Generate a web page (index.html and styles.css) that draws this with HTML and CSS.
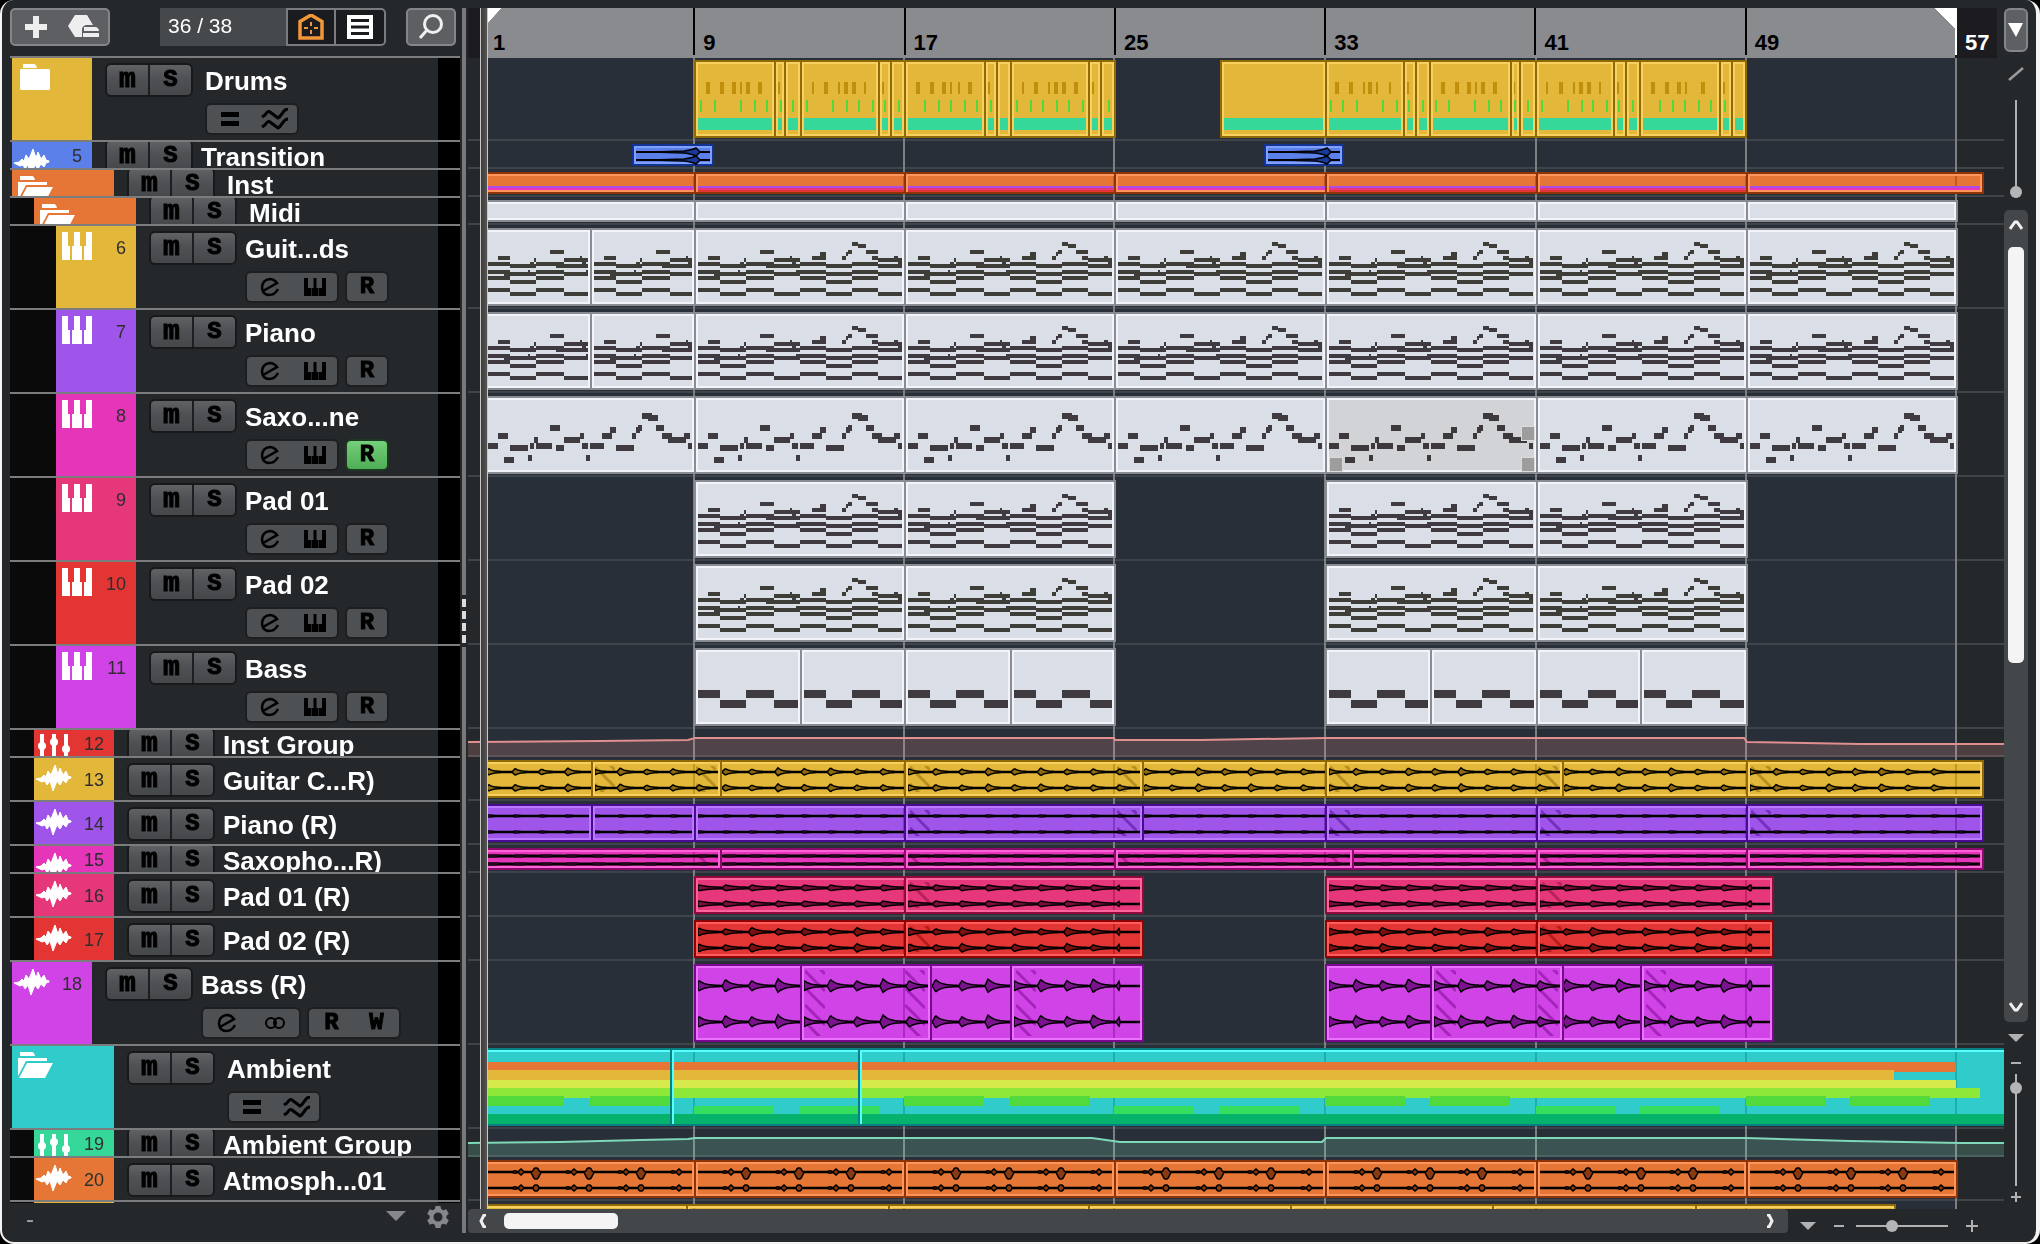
FILE: index.html
```html
<!DOCTYPE html>
<html lang="en">
<head>
<meta charset="utf-8">
<title>Project window</title>
<link rel="stylesheet" href="styles.css">
</head>
<body>
<div class="window">
  <section class="panel" aria-label="Track list">
    <header class="toolbar">
      <div class="tool-group">
        <button class="tool" aria-label="Add track"><svg width="22" height="22" viewBox="0 0 22 22"><path d="M8 0h6v8h8v6h-8v8H8v-8H0V8h8z" fill="#eee"/></svg></button>
        <button class="tool" aria-label="Track presets"><svg width="32" height="24" viewBox="0 0 32 24"><path d="M7 0h12l6 10H19q-4 0-5 4v8H7L0 11z" fill="#eee"/><path d="M16 12h12q3 1 3 4H16zM15 18h16v4H15z" fill="#eee"/></svg></button>
      </div>
      <div class="view-group">
        <output class="count">36 / 38</output>
        <button class="view" aria-label="Zones"><svg width="26" height="26" viewBox="0 0 26 26" fill="none" stroke="#f2963a"><path d="M2 25V8.500L13 2l11 6.500V25z" stroke-width="3.500" transform="translate(0 -1)"/><path d="M13 8v4M13 16v4M6 14h4M16 14h4" stroke-width="2"/></svg></button>
        <button class="view" aria-label="List view"><svg width="26" height="24" viewBox="0 0 26 24"><path d="M0 0h26v24H0z" fill="#fff"/><path d="M4 5.500h18M4 12h18M4 18.500h18" stroke="#1a1b1e" stroke-width="3"/></svg></button>
      </div>
      <button class="tool search" aria-label="Find track"><svg width="26" height="26" viewBox="0 0 26 26" fill="none" stroke="#f0f0f0" stroke-width="3"><circle cx="15" cy="10" r="8.500"/><path d="M9 16l-7 8"/></svg></button>
    </header>
    <div class="tracks" id="tracks"></div>
    <footer class="panel-foot">
      <span class="foot-name">-</span>
      <button class="plain" aria-label="Track list menu"><svg width="20" height="10" viewBox="0 0 20 10"><path d="M0 0h20L10 10z" fill="#85878a"/></svg></button>
      <button class="plain gear" aria-label="Settings"><svg width="24" height="24" viewBox="-12 -12 24 24"><g fill="#85878a"><path id="tooth" d="M-2.500-11h5l1 5h-7z"/><use href="#tooth" transform="rotate(60)"/><use href="#tooth" transform="rotate(120)"/><use href="#tooth" transform="rotate(180)"/><use href="#tooth" transform="rotate(240)"/><use href="#tooth" transform="rotate(300)"/></g><circle r="6.500" fill="none" stroke="#85878a" stroke-width="4"/></svg></button>
    </footer>
  </section>

  <div class="divider"><i class="rail"></i><span class="grip"><i></i><i></i><i></i><i></i></span><i class="rail"></i></div>

  <main class="timeline">
    <div class="ruler">
      <span class="gutter"></span>
      <span class="bar first">1</span><span class="bar">9</span><span class="bar">17</span><span class="bar">25</span><span class="bar">33</span><span class="bar">41</span><span class="bar last">49</span><span class="bar end">57</span>
      <span class="rest"></span>
    </div>
    <div class="lanes" id="lanes"></div>
    <div class="cursor"></div>
    <div class="bottom">
      <div class="hscroll">
        <button class="plain" aria-label="Scroll left"><svg width="10" height="14" viewBox="0 0 10 14"><path d="M8 1H6L3 7l3 6h2" fill="none" stroke="#f0f0f0" stroke-width="3"/></svg></button>
        <span class="hthumb"></span>
        <button class="plain right" aria-label="Scroll right"><svg width="10" height="14" viewBox="0 0 10 14"><path d="M1 1h2l3 6-3 6H1" fill="none" stroke="#f0f0f0" stroke-width="3"/></svg></button>
      </div>
      <div class="hzoom">
        <button class="plain" aria-label="Zoom presets"><svg width="16" height="8" viewBox="0 0 16 8"><path d="M0 0h16L8 8z" fill="#b0b1b3"/></svg></button>
        <button class="plain" aria-label="Zoom out"><svg width="10" height="12" viewBox="0 0 10 12"><path d="M0 5h10v2H0z" fill="#b0b1b3"/></svg></button>
        <input class="slider" type="range" aria-label="Horizontal zoom" value="37">
        <button class="plain" aria-label="Zoom in"><svg width="12" height="12" viewBox="0 0 12 12"><path d="M5 0h2v5h5v2H7v5H5V7H0V5h5z" fill="#b0b1b3"/></svg></button>
      </div>
    </div>
  </main>

  <aside class="side">
    <button class="drop" aria-label="Event display"><svg width="16" height="14" viewBox="0 0 16 14"><path d="M0 0h15L8 14z" fill="#fff"/></svg></button>
    <svg class="slash" width="16" height="16" viewBox="0 0 16 16"><path d="M1 14L15 2" stroke="#9a9b9d" stroke-width="2.500"/></svg>
    <input class="slider vertical wave-zoom" type="range" aria-label="Waveform zoom" value="0">
    <div class="vscroll">
      <button class="plain" aria-label="Scroll up"><svg width="14" height="12" viewBox="0 0 14 12"><path d="M1 10l5-7h2l5 7" fill="none" stroke="#f0f0f0" stroke-width="3"/></svg></button>
      <span class="vthumb"></span>
      <button class="plain down" aria-label="Scroll down"><svg width="14" height="12" viewBox="0 0 14 12"><path d="M1 2l5 7h2l5-7" fill="none" stroke="#f0f0f0" stroke-width="3"/></svg></button>
    </div>
    <div class="vzoom">
      <button class="plain" aria-label="Height presets"><svg width="16" height="8" viewBox="0 0 16 8"><path d="M0 0h16L8 8z" fill="#b0b1b3"/></svg></button>
      <button class="plain" aria-label="Smaller tracks"><svg width="10" height="2" viewBox="0 0 10 2"><path d="M0 0h10v2H0z" fill="#b0b1b3"/></svg></button>
      <input class="slider vertical" type="range" aria-label="Vertical zoom" value="92">
      <button class="plain" aria-label="Taller tracks"><svg width="10" height="10" viewBox="0 0 10 10"><path d="M4 0h2v4h4v2H6v4H4V6H0V4h4z" fill="#b0b1b3"/></svg></button>
    </div>
  </aside>
</div>
<script src="script.js"></script>
</body>
</html>
```

FILE: styles.css
```css
* { box-sizing: border-box; }

body {
  margin: 0;
  background: #000;
  font-family: "Liberation Sans", Arial, sans-serif;
  color: #fff;
}

button {
  margin: 0;
  padding: 0;
  border: 0;
  background: none;
  color: inherit;
  font: inherit;
  display: flex;
  align-items: center;
  justify-content: center;
}

svg { display: block; flex: none; }

.window {
  display: grid;
  grid-template-columns: 452px 6px minmax(0, 1fr) 32px;
  height: 100vh;
  padding: 8px 0 0 8px;
  background: #25282b;
  border: solid #f4f4f4;
  border-width: 0 4px 2px 2px;
  border-radius: 14px;
  overflow: hidden;
}

/* ---- track list ---- */

.panel {
  display: flex;
  flex-direction: column;
  min-height: 0;
  padding-right: 2px;
}

.toolbar {
  display: flex;
  height: 48px;
  flex: none;
}

.tool-group,
.tool.search {
  height: 38px;
  background: #5d5f62;
  border: 2px solid #838588;
  border-radius: 5px;
}

.tool-group { display: flex; width: 100px; }
.tool { flex: 1; }
.tool.search { flex: none; width: 50px; margin-left: 20px; }

.view-group {
  display: flex;
  width: 226px;
  height: 38px;
  margin-left: 50px;
}

.count {
  width: 126px;
  padding-left: 8px;
  background: #46494c;
  font-size: 21px;
  line-height: 36px;
}

.view {
  width: 50px;
  background: #1a1b1e;
  border: 2px solid #797b7e;
}

.view:last-child { border-left: 0; border-radius: 0 5px 5px 0; }

.tracks {
  flex: 1;
  min-height: 0;
  overflow: hidden;
}

.track {
  display: flex;
  overflow: hidden;
  height: 44px;
  border-top: 2px solid #7a7c7e;
  background: linear-gradient(to left, #000 22px, transparent 22px);
}

.track.small { height: 28px; }
.track.tall { height: 84px; }

.indent { width: 2px; flex: none; background: #25282b; }
.level1 .indent { width: 24px; background: #0a0a0a; }
.level2 .indent { width: 46px; background: #0a0a0a; }

.tag {
  display: flex;
  justify-content: space-between;
  flex: none;
  width: 80px;
  padding-right: 10px;
  color: #2e2e2e;
}

.open .tag { width: 102px; }

.number {
  padding-top: 12px;
  font-size: 18px;
  line-height: 20px;
}

.small .number { padding-top: 4px; }

.ms {
  display: flex;
  flex: none;
  width: 88px;
  height: 34px;
  margin: 5px 0 0 13px;
  border: 2px solid #17191b;
  border-radius: 6px;
  background: linear-gradient(#606265, #505255 40%, #45484b);
  overflow: hidden;
}

.ms button { flex: 1; }
.ms button + button { border-left: 2px solid #1c1e20; }

.key {
  color: #000;
  font: bold 24px/24px "Liberation Mono", monospace;
  -webkit-text-stroke: 1px #000;
}

.mute { font-size: 28px; }

.info { margin-left: 8px; }
.folder .info { margin-left: 12px; }

.name {
  display: block;
  padding-top: 8px;
  font-size: 26px;
  font-weight: bold;
  line-height: 30px;
  white-space: nowrap;
}

.small .ms { margin-top: -3px; }
.small .name { padding-top: 0; }

.actions { display: flex; gap: 6px; margin-top: 7px; }

.action {
  display: flex;
  width: 94px;
  height: 32px;
  border: 2px solid #1c1e20;
  border-radius: 6px;
  background: #4d5154;
  color: #000;
}

.action button { flex: 1; }
.action.wide { width: 100px; }
.action.single { width: 44px; }
.action.armed { background: linear-gradient(#74d07a, #4fae55); border-color: #1d3a20; }

.panel-foot {
  display: flex;
  align-items: flex-start;
  flex: none;
  height: 39px;
  color: #a0a2a4;
}

.foot-name { flex: 1; padding: 4px 0 0 16px; font-size: 24px; line-height: 24px; }
.panel-foot .plain { margin-top: 8px; }
.panel-foot .gear { margin: 2px 10px 0 20px; }

/* ---- divider ---- */

.divider {
  display: flex;
  flex-direction: column;
  padding: 0 2px 9px 0;
}

.rail { flex: 1; background: #77797b; }
.grip { display: flex; flex-direction: column; gap: 4px; height: 52px; padding-top: 4px; }
.grip i { height: 8px; background: #dcdcdc; }

/* ---- timeline ---- */

.timeline {
  position: relative;
  display: flex;
  flex-direction: column;
  min-height: 0;
}

.ruler {
  position: relative;
  z-index: 1;
  display: flex;
  flex: none;
  height: 50px;
  color: #000;
  font-size: 22px;
  font-weight: bold;
  line-height: 24px;
  text-indent: 10px;
}

.gutter { flex: 150 0 0; background: #1c1c20; }

.bar {
  flex: 2103 0 0;
  padding-top: 23px;
  background: linear-gradient(#000, #000) 0 0 / 2px 47px no-repeat #8a8b8f;
}

.bar.first { background: linear-gradient(to bottom right, #fff 50%, transparent 52%) 0 0 / 18px 20px no-repeat #8a8b8f; }
.bar.last { background: linear-gradient(#000, #000) 0 0 / 2px 47px no-repeat, linear-gradient(to bottom left, #fff 50%, transparent 52%) 100% 0 / 20px 20px no-repeat #8a8b8f; }
.bar.end { flex-grow: 420; background: linear-gradient(#fff, #fff) 0 0 / 2px 47px no-repeat #1c1c20; color: #fff; }
.rest { flex: 69 0 0; background: #25282b; }

.lanes {
  flex: 1;
  min-height: 0;
  margin-top: -1px;
  overflow: hidden;
}

.lane { width: 100%; height: 44px; }
.lane.small { height: 28px; }
.lane.tall { height: 84px; }
.tint { mix-blend-mode: multiply; }

.cursor {
  position: absolute;
  z-index: 2;
  left: 12px;
  top: 0;
  bottom: 33px;
  width: 8px;
  background: linear-gradient(to right, #3c3c3c, #585652);
  border: solid #c8c8c8;
  border-width: 0 1px;
}

.bottom { display: flex; flex: none; height: 33px; }

.hscroll {
  display: flex;
  align-items: center;
  flex: 1;
  height: 24px;
  padding: 0 12px 0 10px;
  background: #44474a;
  border-radius: 4px;
}

.hthumb {
  width: 114px;
  height: 16px;
  margin-left: 16px;
  border-radius: 5px;
  background: #f4f4f4;
}

.right { margin-left: auto; }

.hzoom {
  display: flex;
  align-items: center;
  width: 216px;
  gap: 12px;
  padding: 0 26px 0 12px;
}

.hzoom .plain:first-child { margin-right: 6px; }
.hzoom .plain:last-child { margin-left: 6px; }

/* ---- sliders and right column ---- */

.slider {
  appearance: none;
  width: 92px;
  height: 14px;
  margin: 0;
  background: linear-gradient(#b0b1b3, #b0b1b3) center / 100% 2px no-repeat;
}

.slider::-webkit-slider-thumb {
  appearance: none;
  width: 12px;
  height: 12px;
  border-radius: 6px;
  background: #b4b5b7;
}

.slider.vertical {
  writing-mode: vertical-lr;
  direction: rtl;
  width: 14px;
  height: 112px;
  background: linear-gradient(#b0b1b3, #b0b1b3) center / 2px 100% no-repeat;
}

.slider.wave-zoom { height: 98px; margin-top: 18px; }

.side {
  display: flex;
  flex-direction: column;
  align-items: center;
  width: 24px;
  min-height: 0;
}

.drop {
  width: 24px;
  height: 44px;
  flex: none;
  background: #5d5f62;
  border: 2px solid #838588;
  border-radius: 6px;
}

.slash { margin-top: 14px; }

.vscroll {
  display: flex;
  flex-direction: column;
  align-items: center;
  flex: 1;
  width: 24px;
  margin-top: 12px;
  padding: 9px 0 9px;
  border-radius: 5px;
  background: #44474a;
}

.vthumb {
  width: 16px;
  height: 416px;
  margin-top: 16px;
  border-radius: 5px;
  background: #f4f4f4;
}

.down { margin-top: auto; }

.vzoom {
  display: flex;
  flex-direction: column;
  align-items: center;
  height: 220px;
  padding-top: 12px;
}

.vzoom .plain:nth-child(2) { margin: 20px 0 10px; }
.vzoom .plain:last-child { margin-top: 6px; }
```

FILE: script.js
```js
// Colours of a clip: body, edge and inner highlight.
const C = {
  gold: ['#e2b73a', '#8f6a06', '#f8d05e'],
  blue: ['#5b80ea', '#123392', '#7fa0ff'],
  orange: ['#e57636', '#8e3508', '#fd955c'],
  midi: ['#dadee6', '#898d93', '#f3f4f9'],
  purple: ['#a055ea', '#4b0a94', '#ba7aff'],
  pink: ['#e535b8', '#8c0a6b', '#ff62d6'],
  rose: ['#e5377a', '#900a3c', '#ff649c'],
  red: ['#e43535', '#8e0404', '#ff5c5c'],
  violet: ['#d043e6', '#790790', '#ea72ff'],
  teal: ['#30cccb', '#088080', '#58ffff'],
  green: ['#35d899', '#0a7a50', '#6fffc8']
};

const VIEW_X = 468, VIEW_W = 1536;            // visible range of the timeline
const BARS = [484, 694, 904, 1114, 1325, 1536, 1746, 1956];  // every 8 bars
const BAR = 26.27;

const rect = (x, y, w, h, fill, o = 1) =>
  `<rect x="${x}" y="${y}" width="${w}" height="${h}" fill="${fill}"${o < 1 ? ` opacity="${o}"` : ''}/>`;
const blocks = (list, fill) =>
  `<path fill="${fill}" d="${list.map(([x, y, w, h]) => `M${x} ${y}h${w}v${h}h${-w}z`).join('')}"/>`;

function clip(color, x1, x2, h, inner = '') {
  const [body, edge, light] = C[color];
  let s = rect(x1, 3, x2 - x1, h - 6, edge) + rect(x1 + 2, 5, x2 - x1 - 4, h - 10, light) +
    rect(x1 + 4, 7, x2 - x1 - 8, h - 14, body);
  for (const b of BARS) if (b - 1 > x1 + 3 && b + 1 < x2 - 3 && color !== 'midi') s += rect(b - 1, 7, 2, h - 14, edge, .4);
  return s + `<svg x="${x1 + 4}" y="3" width="${Math.max(x2 - x1 - 8, 1)}" height="${h - 6}" viewBox="${x1 + 4} 0 ${Math.max(x2 - x1 - 8, 1)} ${h - 6}" preserveAspectRatio="none">${inner}</svg>`;
}

/* ---- MIDI parts: [x, y, width, height] inside an 8-bar part ---- */
const span = (y, h, ...xs) => xs.map(([a, b]) => [a, y, b - a, h]);
const CHORDS = [
  ...span(34, 4, [4, 26], [52, 80], [106, 132], [158, 184]), ...span(36, 4, [26, 52], [72, 106], [132, 158], [184, 208]),
  ...span(42, 4, [4, 26], [52, 80], [102, 132], [158, 184]), ...span(44, 4, [20, 52], [80, 106], [132, 158], [184, 208]),
  ...span(48, 4, [4, 26], [52, 80], [106, 132], [158, 184]), ...span(52, 4, [26, 52], [132, 158]),
  ...span(60, 4, [4, 26], [52, 80], [106, 132], [158, 184]), ...span(64, 4, [26, 52], [80, 106], [132, 158], [184, 208]),
  ...span(28, 4, [14, 26], [118, 132], [148, 152], [178, 184]), ...span(22, 4, [66, 80], [154, 158], [172, 184]),
  ...span(30, 4, [50, 52], [80, 106], [184, 208]), ...span(28, 2, [96, 98], [200, 204]), ...span(24, 4, [126, 132], [152, 154]),
  [46, 34, 4, 2], [44, 42, 2, 2], [98, 32, 4, 5], [204, 30, 4, 7], [20, 44, 6, 8], [158, 14, 6, 4], [164, 16, 8, 4]
];
const MELODY = [
  ...span(47, 6, [4, 14], [46, 50], [52, 68], [98, 104], [106, 120], [204, 208]), ...span(37, 6, [14, 24], [96, 100], [118, 128], [148, 152], [178, 188], [200, 206]),
  ...span(61, 6, [20, 30]), ...span(49, 6, [26, 44], [72, 80], [132, 150]), ...span(59, 6, [44, 48], [102, 106]),
  ...span(41, 6, [50, 54], [80, 96], [184, 202]), ...span(29, 6, [66, 76], [154, 158], [172, 180]), ...span(31, 6, [126, 132], [152, 156]),
  ...span(17, 6, [158, 168]), ...span(19, 6, [164, 174])
];
const BASSLINE = [...span(42, 8, [4, 26], [52, 80]), ...span(52, 8, [26, 52], [80, 104])];
const at = (list, x) => list.map(n => [n[0] + x, n[1], n[2], n[3]]);

const midi = (parts, notes, ink, h) => parts.map(([a, b]) => clip('midi', a, b, h, blocks(at(notes, a === 480 ? 484 : a), ink))).join('');
const FULL = BARS.slice(0, 7).map((b, i) => [i ? b : 480, BARS[i + 1] + 2]);
const SPLIT = [[480, 592], [590, 696], ...FULL.slice(1)];
const PADS = [[694, 906], [904, 1116], [1325, 1538], [1536, 1748]];
const BASSES = [[694, 802], [800, 906], [904, 1012], [1010, 1116], [1325, 1432], [1430, 1538], [1536, 1642], [1640, 1748]];

/* ---- audio ---- */
const DARK = { gold: '#8f6a10', purple: '#6a28b0', pink: '#a01880', rose: '#7c0d3c', red: '#7d1010', violet: '#7d1290' };

function envelope(x1, x2, cy, amp, tau, stop, fill, bars) {
  const up = [], down = [];
  for (let x = x1; x <= x2; x += 1) {
    const d = x - 486, k = Math.floor(d / BAR), t = d - k * BAR;
    const level = amp * (bars ? bars[((k % bars.length) + bars.length) % bars.length] : 1);
    let e = t < 3 ? level * t / 3 : level * Math.exp(-(t - 3) / tau);
    if (x > stop) e = 0;
    up.push(`${x} ${(cy - e - .5).toFixed(1)}`);
    down.unshift(`${x} ${(cy + e * .9 + .5).toFixed(1)}`);
  }
  return `<path d="M${up.join('L')}L${down.join('L')}z" fill="${fill}" stroke="#000" stroke-width="1.500" shape-rendering="auto"/>`;
}

function hatch(x1, w, h, ink) {
  let d = '';
  for (let y = -16; y < h; y += 17) d += `M${x1} ${y}l${w} ${w}`;
  return `<svg x="${x1}" y="6" width="${w}" height="${h - 18}" viewBox="${x1} 0 ${w} ${h - 18}"><path d="${d}" stroke="${ink}" stroke-width="3" opacity=".5" shape-rendering="auto"/></svg>`;
}

function audio(color, parts, h, [y1, y2], amp, tau, bars) {
  return parts.map(([a, b, fades = [], stop = 9999]) => clip(color, a, b, h,
    fades.map(f => hatch(f, 20, h, C[color][1])).join('') +
    [y1, y2].map(y => envelope(a + 4, b - 4, y, amp, tau, stop, DARK[color], bars)).join(''))).join('');
}

const PAD_AUDIO = [[694, 930], [904, 1144, [910], 1119], [1325, 1570], [1536, 1774, [1542], 1751]];

/* wind-like recording: a small bump before each strong one, every two bars */
function atmosphere(h) {
  return FULL.map(([a, b]) => {
    const s = a === 480 ? 484 : a;
    const wave = (cy, big, low) => {
      const shape = (x, dir) => {
        let e = .5;
        for (const c of [37, 90, 142, 195]) e = Math.max(e, 3 - Math.abs(x - s - c) * .9, 1.300 - Math.abs(x - s - c + 6) * .3);
        for (const c of [52, 105, 157]) e = Math.max(e, Math.min(dir < 0 ? big : low, (dir < 0 ? big + 3 : low + 3) - Math.abs(x - s - c) * 1.900));
        return cy + dir * e;
      };
      const xs = Array.from({ length: b - a - 7 }, (_, i) => a + 4 + i);
      return `<path d="M${xs.map(x => x + ' ' + shape(x, -1).toFixed(1)).join('L')}L${xs.slice().reverse().map(x => x + ' ' + shape(x, 1).toFixed(1)).join('L')}z" fill="#8a3a10" stroke="#000" stroke-width="1.500" shape-rendering="auto"/>`;
    };
    return clip('orange', a, b, h, wave(12, 4, 7) + wave(28, 3, 3));
  }).join('');
}

function sweep(a, b, peak) {
  return clip('blue', a, b, 28, [8, 16].map(y =>
    `<path d="M${a} ${y}H${b}" stroke="#000" stroke-width="2"/><path d="M${a + 20} ${y}L${peak - 12} ${y - 1}Q${peak - 4} ${y - 2} ${peak} ${y - 4}L${peak + 4} ${y}L${peak} ${y + 4}Q${peak - 4} ${y + 2} ${peak - 12} ${y + 1}z" fill="#173a9c" stroke="#000" stroke-width="1.500" shape-rendering="auto"/>`).join(''));
}

/* ---- folders ---- */
function drums(h) {
  const group = (x0, cuts, brown, green) => cuts.slice(0, -1).map((c, i) => {
    const a = x0 + c, b = x0 + cuts[i + 1] + 2;
    return clip('gold', a, b, h, blocks([[a + 4, 58, b - a - 8, 12]], '#35d899') +
      blocks(brown.map(n => [x0 + Math.abs(n), 22, n < 0 ? 2 : 4, 12]), '#c08f0c') +
      blocks(green.map(n => [x0 + n, 40, 2, 12]), '#52d93c'));
  }).join('');
  return group(694, [0, 80, 90, 106, 184, 196, 210, 290, 302, 316, 394, 406, 420],
    [12, 26, 38, -46, 52, 64, -84, -118, 130, -144, 150, 158, -170, -188, 222, 236, 248, -256, -264, 274, -294, -328, 340, -354, 360, 368, 380, -398],
    [6, 20, 46, 60, 72, 86, 98, 112, 138, 152, 164, 178, 190, 204, 230, 244, 256, 270, 282, 296, 322, 336, 348, 362, 374, 388, 414]) +
    group(1220, [0, 105], [], []) +
    group(1325, [0, 78, 90, 104, 185, 194, 210, 288, 300, 314, 394, 406, 420],
      [10, 24, -38, 43, -51, -64, -82, 116, 130, 142, -150, 156, 168, -188, -221, 234, -248, 254, 262, -274, -292, 326, 340, 352, -360, 376, -398],
      [5, 17, 31, 57, 71, 83, 97, 110, 123, 149, 163, 175, 189, 202, 216, 242, 256, 267, 281, 293, 307, 334, 347, 359, 373, 385, 399]);
}

function inst(h) {
  return BARS.slice(0, 7).map((b, i) => {
    const a = i ? b : 480, e = i < 6 ? BARS[i + 1] + 6 : 1984, pads = [1, 2, 4, 5].includes(i);
    return clip('orange', a, e, h, rect(a, 14, e - a, 2, '#a84ee6') + rect(a, 16, e - a, 2, pads ? '#e5377a' : '#e535b8') + (pads ? rect(a, 18, e - a, 2, '#e43535') : ''));
  }).join('');
}

function ambient(h) {
  const low = [[484, 80], [590, 81], [904, 80], [1010, 80], [1325, 80], [1430, 80], [1746, 80], [1850, 80]];
  const lower = [[694, 80], [800, 80], [1114, 80], [1219, 81], [1536, 80], [1640, 80]];
  let s = clip('teal', 482, 2010, h) + rect(484, 17, 1472, 10, '#e57636') + rect(484, 25, 1410, 10, '#e2b73a') +
    rect(484, 35, 1472, 8, '#d6ea4c') + rect(484, 43, 1496, 10, '#8de838') +
    low.map(([x, w]) => rect(x, 51, w, 10, '#52da3c')).join('') + lower.map(([x, w]) => rect(x, 61, w, 8, '#35de5e')).join('') +
    rect(484, 69, 1526, 10, '#07b26c');
  for (const x of [670, 858]) s += rect(x, 3, 2, h - 6, '#088080') + rect(x + 2, 5, 2, h - 10, '#58ffff');
  return s;
}

function automation(points, line, h) {
  return `<g shape-rendering="auto"><path d="M468 ${h}L${points}L2004 ${h}z" fill="${line}" opacity=".22"/><path d="M${points}" fill="none" stroke="${line}" stroke-width="2"/></g>`;
}

/* ---- tracks ---- */
const T = (name, color, icon, size, level, number, draw, kind) => ({ name, color, icon, size, level, number, draw, kind });
const INK1 = '#3f3d38', INK2 = '#3f3a40';
const TRACKS = [
  T('Drums', 'gold', 'folder', 'tall', 0, '', drums, 'folder'),
  T('Transition', 'blue', 'wave', 'small', 0, 5, () => sweep(632, 714, 696) + sweep(1264, 1344, 1327)),
  T('Inst', 'orange', 'open', 'small', 0, '', inst, 'folder open'),
  T('Midi', 'orange', 'open', 'small', 1, '', h => midi(FULL, [], INK1, h), 'folder open'),
  T('Guit...ds', 'gold', 'keys', 'tall', 2, 6, h => midi(SPLIT, CHORDS, INK1, h)),
  T('Piano', 'purple', 'keys', 'tall', 2, 7, h => midi(SPLIT, CHORDS, INK2, h)),
  T('Saxo...ne', 'pink', 'keys', 'tall', 2, 8, h => midi(FULL, MELODY, INK2, h) + selection(), 'armed'),
  T('Pad 01', 'rose', 'keys', 'tall', 2, 9, h => midi(PADS, CHORDS, INK2, h)),
  T('Pad 02', 'red', 'keys', 'tall', 2, 10, h => midi(PADS, CHORDS, INK1, h)),
  T('Bass', 'violet', 'keys', 'tall', 2, 11, h => midi(BASSES, BASSLINE, INK2, h)),
  T('Inst Group', 'red', 'faders', 'small', 1, 12, h => automation('468 13L600 12L688 11L695 9L1114 9L1115 11L1200 11L1325 9L1744 9L1747 13L1860 15L2004 15', '#e08f8f', h)),
  T('Guitar C...R)', 'gold', 'wave', 'mid', 1, 13, h => audio('gold', [[480, 640], [694, 930], [1114, 1350], [1536, 1770], [591, 722, [595, 696]], [904, 1144, [910, 1117]], [1325, 1564, [1330, 1538]], [1746, 1984, [1751], 1956]], h, [12, 28], 3, 4, [.9, 1, .8, 1.2, 1, 1.2, .8, .9])),
  T('Piano (R)', 'purple', 'wave', 'mid', 1, 14, h => audio('purple', [[480, 593], [591, 696], [694, 940], [1114, 1350], [904, 1144, [910, 1117]], [1325, 1570, [1330]], [1536, 1780, [1541]], [1746, 1984, [1751]]], h, [12, 28], .6, 4)),
  T('Saxopho...R)', 'pink', 'wave', 'small', 1, 15, h => audio('pink', [[694, 930], [480, 722, [698]], [904, 1140, [910]], [1325, 1560], [1114, 1354, [1120, 1330]], [1536, 1770, [1541]], [1746, 1984]], h, [8, 16], .6, 20)),
  T('Pad 01 (R)', 'rose', 'wave', 'mid', 1, 16, h => audio('rose', PAD_AUDIO, h, [12, 28], 2.5, 10)),
  T('Pad 02 (R)', 'red', 'wave', 'mid', 1, 17, h => audio('red', PAD_AUDIO, h, [12, 28], 3.4, 6, [1, .8, 1.2, .8])),
  T('Bass (R)', 'violet', 'wave', 'tall', 0, 18, h => audio('violet', [[694, 830], [904, 1040], [800, 932, [805, 905]], [1010, 1144, [1016], 1119], [1325, 1460], [1536, 1670], [1430, 1564, [1436, 1538]], [1640, 1774, [1646], 1751]], h, [22, 58], 6, 6, [.8, 1, .8, 1.1]), 'bus'),
  T('Ambient', 'teal', 'open', 'tall', 0, '', ambient, 'folder open'),
  T('Ambient Group', 'green', 'faders', 'small', 1, 19, h => automation('468 14L560 13L640 11L688 10L695 9L1092 9L1120 13L1322 13L1326 9L1746 9L1850 12L1960 14L2004 14', '#7fd8b8', h)),
  T('Atmosph...01', 'orange', 'wave', 'mid', 1, 20, atmosphere),
  T('', 'gold', 'none', 'mid', 1, '', h => [[480, 688], [686, 890], [888, 1090], [1088, 1292], [1290, 1494], [1492, 1697], [1695, 1896]].map(([a, b]) => clip('gold', a, b, h, rect(b - 7, 5, 2, 20, '#000'))).join(''))
];

function selection() {
  const grip = (x, y) => rect(x - 1, y - 1, 14, 15, '#dcdcdc') + rect(x, y, 12, 13, '#9d9d9d');
  return `<rect class="tint" x="1329" y="7" width="205" height="70" fill="#f6f3ee"/>` + grip(1330, 65) + grip(1522, 65) + grip(1522, 34);
}

const ICONS = {
  none: '',
  folder: '<svg width="38" height="34" viewBox="0 0 38 34"><path d="M11 6h11q2 0 3 4H11zM9 11q-1 0-1 2v17q0 2 1 2h28q1 0 1-2V13q0-2-1-2z" fill="#fff"/></svg>',
  open: '<svg width="44" height="36" viewBox="0 0 44 36"><path d="M8 6h12q2 0 3 4H8zM6 12h29v3H14L6 30z" fill="#fff"/><path d="M15 17h26l-8 15H7z" fill="#fff"/></svg>',
  wave: '<svg width="40" height="40" viewBox="0 0 40 40"><path d="M2 21l5-1 3-3 2 2 2-6 3 4 4-10 3 9 2-6 3 7 3-4 2 5 3 1v1l-3 1-2 4-3-3-3 5-3-4-4 10-3-10-3 4-2-4-3 1z" fill="#fff" stroke="#fff" stroke-linejoin="round"/></svg>',
  keys: '<svg width="38" height="36" viewBox="0 0 38 36"><path d="M6 6h6v14h2v14H6zM18 6h6v14h2v14H16V20h2zM30 6h6v28h-8V20h2z" fill="#fff"/></svg>',
  faders: '<svg width="38" height="34" viewBox="0 0 38 34"><path d="M8 4v24M20 4v24M32 4v24" stroke="#fff" stroke-width="4"/><circle cx="8" cy="16" r="4" fill="#fff"/><circle cx="20" cy="12" r="4" fill="#fff"/><circle cx="32" cy="19" r="4" fill="#fff"/></svg>',
  equal: '<svg width="18" height="14" viewBox="0 0 18 14"><path d="M0 0h18v5H0zM0 9h18v5H0z"/></svg>',
  lanes: '<svg width="28" height="22" viewBox="0 0 28 22" fill="none" stroke="#000" stroke-width="3"><path d="M1 9l3-2q3-5 5-3l8 6q2-1 3-3l3-4q2-2 4-2M1 19l3-2q3-5 5-3l8 6q2-1 3-3l3-4q2-2 4-2"/></svg>',
  edit: '<svg width="20" height="20" viewBox="0 0 20 20" fill="none" stroke="#000" stroke-width="2.500"><path d="M3 14L17 6q-3-4-7-4-8 1-8 9 1 7 7 7 6 0 9-6"/></svg>',
  piano: '<svg width="22" height="18" viewBox="0 0 22 18"><path d="M0 0h4v10h3v8H0zM9.500 0h3v10h2v8h-7v-8h2zM18 0h4v18h-7v-8h3z"/></svg>',
  stereo: '<svg width="20" height="12" viewBox="0 0 20 12" fill="none" stroke="#000" stroke-width="2"><circle cx="6" cy="6" r="5"/><circle cx="14" cy="6" r="5"/></svg>'
};
const btn = (label, content) => `<button aria-label="${label}">${content}</button>`;
const letter = (label, l, cls = '') => `<button aria-label="${label}"><span class="key ${cls}">${l}</span></button>`;

function actions(t) {
  if (t.size !== 'tall') return '';
  if (t.icon === 'folder' || t.icon === 'open') return `<div class="actions"><div class="action">${btn('Group editing', ICONS.equal)}${btn('Show lanes', ICONS.lanes)}</div></div>`;
  if (t.kind === 'bus') return `<div class="actions"><div class="action wide">${btn('Edit channel', ICONS.edit)}${btn('Stereo', ICONS.stereo)}</div><div class="action">${letter('Read', 'R')}${letter('Write', 'W')}</div></div>`;
  return `<div class="actions"><div class="action">${btn('Edit channel', ICONS.edit)}${btn('Instrument', ICONS.piano)}</div><div class="action single ${t.kind || ''}">${letter('Read', 'R')}</div></div>`;
}

document.getElementById('tracks').innerHTML = TRACKS.map(t => `
  <div class="track ${t.size} level${t.level} ${t.kind === 'armed' ? '' : t.kind || ''}">
    <span class="indent"></span>
    <div class="tag" style="background:${C[t.color][0]}">${ICONS[t.icon]}<span class="number">${t.number}</span></div>
    ${t.name && `<div class="ms">${letter('Mute', 'm', 'mute')}${letter('Solo', 'S')}</div>
    <div class="info"><span class="name">${t.name}</span>${actions(t)}</div>`}
  </div>`).join('');

const HEIGHT = { tall: 84, mid: 44, small: 28 };
document.getElementById('lanes').innerHTML = TRACKS.map(t => {
  const h = HEIGHT[t.size];
  const grid = BARS.slice(1).map(b => rect(b - 1, 0, 2, h, '#7c8081')).join('');
  // A lane's artwork stops 3px short of the next lane, hence the clip height of h - 6.
  return `<svg class="lane ${t.size}" viewBox="${VIEW_X} 0 ${VIEW_W} ${h}" preserveAspectRatio="none" shape-rendering="crispEdges">` +
    rect(VIEW_X, 0, VIEW_W, h, '#25282b') + rect(488, 0, 1468, h, '#282f38') +
    rect(VIEW_X, h - 2, VIEW_W, 2, '#3e444a') + grid + t.draw(h) + '</svg>';
}).join('');
```
